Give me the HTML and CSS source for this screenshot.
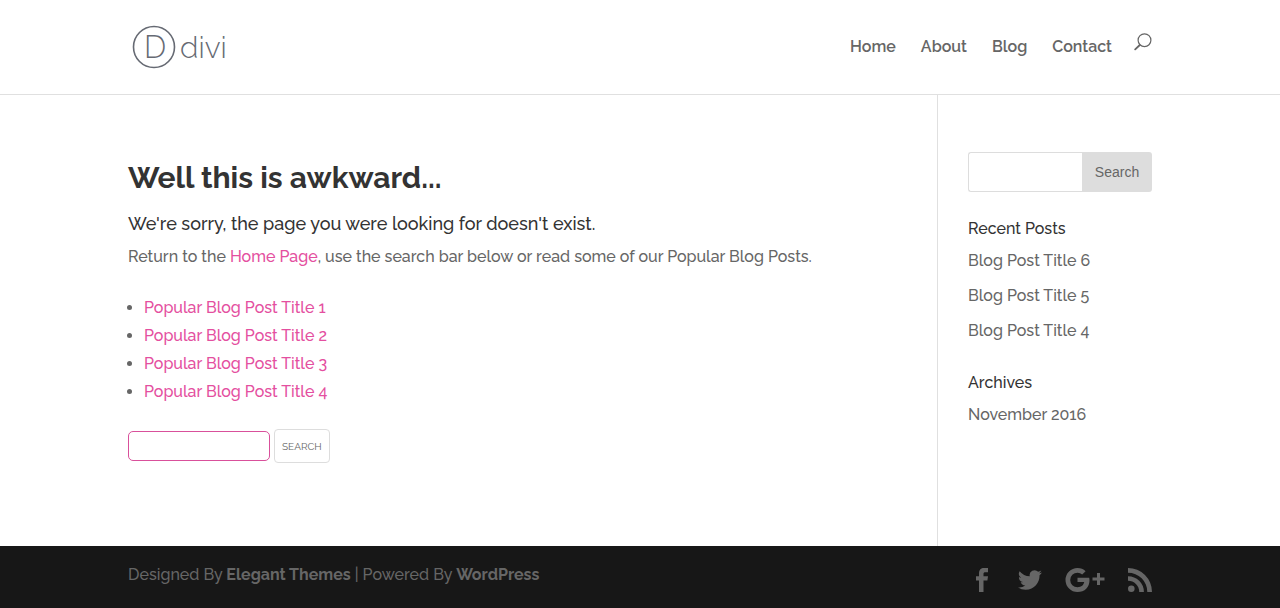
FILE: index.html
```html
<!DOCTYPE html>
<html lang="en">
<head>
  <meta charset="UTF-8">
  <meta name="viewport" content="width=device-width, initial-scale=1">
  <title>Page not found | Divi</title>
  <link rel="stylesheet" href="styles.css">
</head>
<body>

<header class="main-header">
  <div class="container header-inner">
    <a href="#" class="logo" aria-label="Divi">
      <svg width="102" height="46" viewBox="0 0 102 46">
        <circle cx="26" cy="23" r="20.5" fill="none" stroke="#666a73" stroke-width="1.6"/>
        <text x="16" y="34" class="logo-mark">D</text>
        <text x="52" y="34" class="logo-name">divi</text>
      </svg>
    </a>
    <nav class="top-menu">
      <a href="#">Home</a>
      <a href="#">About</a>
      <a href="#">Blog</a>
      <a href="#">Contact</a>
      <button type="button" class="search-icon" aria-label="Open search">
        <svg width="18" height="18" viewBox="0 0 18 18" fill="none" stroke="#666" stroke-linecap="round">
          <circle cx="10.5" cy="7.2" r="6.4" stroke-width="1.2"/>
          <path d="M5.8 12L1.2 16.4" stroke-width="1.8"/>
        </svg>
      </button>
    </nav>
  </div>
</header>

<main class="container content">
  <article class="left-area">
    <h1>Well this is awkward...</h1>
    <h2>We're sorry, the page you were looking for doesn't exist.</h2>
    <p>Return to the <a href="#">Home Page</a>, use the search bar below or read some of our Popular Blog Posts.</p>
    <ul class="popular">
      <li><a href="#">Popular Blog Post Title 1</a></li>
      <li><a href="#">Popular Blog Post Title 2</a></li>
      <li><a href="#">Popular Blog Post Title 3</a></li>
      <li><a href="#">Popular Blog Post Title 4</a></li>
    </ul>
    <form class="page-search">
      <input type="text" aria-label="Search for">
      <button type="submit">SEARCH</button>
    </form>
  </article>

  <aside class="sidebar">
    <form class="side-search">
      <input type="text" aria-label="Search this site">
      <button type="submit">Search</button>
    </form>
    <section class="widget">
      <h4>Recent Posts</h4>
      <ul>
        <li><a href="#">Blog Post Title 6</a></li>
        <li><a href="#">Blog Post Title 5</a></li>
        <li><a href="#">Blog Post Title 4</a></li>
      </ul>
    </section>
    <section class="widget">
      <h4>Archives</h4>
      <ul>
        <li><a href="#">November 2016</a></li>
      </ul>
    </section>
  </aside>
</main>

<footer class="main-footer">
  <div class="container footer-inner">
    <p>Designed By <a href="#">Elegant Themes</a> | Powered By <a href="#">WordPress</a></p>
    <div class="social">
      <a href="#" aria-label="Facebook">
        <svg width="20" height="24" viewBox="0 0 20 24"><path d="M4 24V12.500H1V8.300h3V5.500C4 1.800 6 0 9 0h4v4.200h-2.500C8.900 4.200 8.500 4.800 8.500 6v2.300H13l-.6 4.200H8.500V24z"/></svg>
      </a>
      <a href="#" aria-label="Twitter">
        <svg width="24" height="24" viewBox="0 0 24 24"><path d="M23.950 4.570a10 10 0 01-2.820.77 4.960 4.960 0 002.160-2.720c-.95.55-2 .96-3.130 1.180a4.920 4.920 0 00-8.380 4.480A13.900 13.900 0 011.640 3.160a4.920 4.920 0 001.520 6.570 4.900 4.900 0 01-2.230-.61v.06a4.920 4.920 0 003.950 4.830 5 5 0 01-2.210.08 4.940 4.940 0 004.600 3.420A9.870 9.870 0 010 19.540a14 14 0 007.550 2.210c9.050 0 14-7.500 14-13.980l-.02-.63a9.900 9.900 0 002.420-2.570z"/></svg>
      </a>
      <a href="#" aria-label="Google Plus">
        <svg width="40" height="24" viewBox="0 0 40 24">
          <path d="M12.500 9.700h11.700c.2.800.3 1.600.3 2.500C24.500 19.300 19.800 24 12.500 24a12 12 0 110-24c3.300 0 6 1.200 8.100 3.200l-3.400 3.300a6.700 6.700 0 00-4.700-1.800 7.300 7.300 0 100 14.600c4 0 6.200-2.200 6.700-5.200h-6.700z"/>
          <path d="M32 5h3v4.500h4.500v3H35V17h-3v-4.500h-4.500v-3H32z"/>
        </svg>
      </a>
      <a href="#" aria-label="RSS">
        <svg width="24" height="24" viewBox="0 0 24 24"><circle cx="3.300" cy="20.700" r="3.300"/><path d="M0 8.200v4.600A11.200 11.200 0 0111.200 24h4.700A15.900 15.900 0 000 8.200zM0 0v4.700A19.300 19.300 0 0119.300 24H24A24 24 0 000 0z"/></svg>
      </a>
    </div>
  </div>
</footer>

</body>
</html>
```
FILE: styles.css
```css
* {
  box-sizing: border-box;
}
body {
  margin: 0;
  min-height: 100vh;
  display: flex;
  flex-direction: column;
  background: #fff;
  color: #666;
  font-family: Raleway, Lato, sans-serif;
  font-size: 16px;
  font-weight: 500;
  line-height: 28px;
}
h1, h2, h4, p, ul {
  margin: 0;
  padding: 0;
}
a {
  color: #e44fa0;
  text-decoration: none;
}
.container {
  width: 80%;
  margin: 0 auto;
}

/* header */
.main-header {
  border-bottom: 1px solid #e0e0e0;
}
.header-inner {
  display: flex;
  justify-content: space-between;
  align-items: center;
  height: 94px;
}
.logo svg {
  display: block;
}
.logo-mark, .logo-name {
  font-family: Raleway, Lato, sans-serif;
  font-weight: 300;
  fill: #666a73;
}
.logo-mark {
  font-size: 31px;
}
.logo-name {
  font-size: 30px;
}
.top-menu {
  display: flex;
  align-items: center;
  gap: 25px;
}
.top-menu a {
  color: #666;
  font-weight: 600;
}
.search-icon {
  padding: 0 0 10px;
  margin-left: -3px;
  border: 0;
  background: none;
  cursor: pointer;
}
.search-icon svg {
  display: block;
}

/* content */
.content {
  flex: 1;
  display: flex;
}
.left-area {
  flex: 1;
  padding: 64px 30px 82px 0;
}
h1 {
  color: #333;
  font-size: 30px;
  font-weight: 700;
  line-height: 38px;
}
h2 {
  margin-top: 14px;
  color: #333;
  font-size: 18px;
  font-weight: 500;
  line-height: 26px;
}
.left-area p {
  margin-top: 6px;
}
.popular {
  padding: 23px 0 23px 16px;
}
.page-search {
  display: flex;
  align-items: center;
  gap: 4px;
}
.page-search input {
  width: 142px;
  height: 30px;
  padding: 2px 6px;
  border: 1px solid #d9509b;
  border-radius: 5px;
}
.page-search button {
  height: 34px;
  padding: 0 7px;
  border: 1px solid #ddd;
  border-radius: 4px;
  background: #fff;
  color: #666;
  font-family: inherit;
  font-size: 10px;
}

/* sidebar */
.sidebar {
  width: 215px;
  padding: 57px 0 30px 30px;
  border-left: 1px solid #e0e0e0;
}
.side-search {
  display: flex;
  height: 40px;
  margin-bottom: 25px;
}
.side-search input {
  flex: 1;
  min-width: 0;
  padding: 0 10px;
  border: 1px solid #ddd;
  border-right: 0;
  border-radius: 3px 0 0 3px;
}
.side-search button {
  width: 70px;
  border: 0;
  border-radius: 0 3px 3px 0;
  background: #ddd;
  color: #666;
  font-family: "Liberation Sans", Arial, sans-serif;
  font-size: 14px;
}
.widget {
  margin-bottom: 26px;
}
.widget h4 {
  margin-bottom: 6px;
  color: #333;
  font-size: 16px;
  font-weight: 500;
  line-height: 24px;
}
.widget ul {
  list-style: none;
}
.widget li {
  margin-bottom: 7px;
}
.widget a {
  color: #666;
}

/* footer */
.main-footer {
  background: #171717;
  color: #666;
}
.footer-inner {
  display: flex;
  justify-content: space-between;
  padding: 15px 0 19px;
}
.main-footer a {
  color: #666;
  font-weight: 700;
}
.social {
  display: flex;
  gap: 23px;
  padding-top: 7px;
  height: 28px;
}
.social svg {
  display: block;
  fill: #666;
}
```
